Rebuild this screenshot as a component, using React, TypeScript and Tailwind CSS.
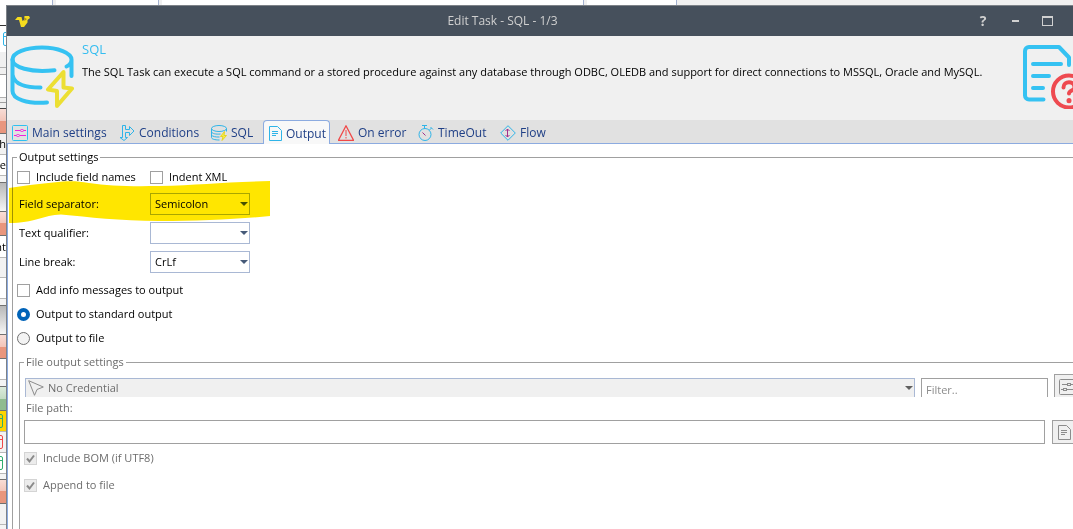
import React from "react";

type IconProps = { className?: string };

const SettingsIcon = ({ className = "" }: IconProps) => (
  <svg viewBox="0 0 16 16" className={className} fill="none">
    <rect x="0.5" y="0.5" width="15" height="15" rx="1" className="stroke-[#2fc0f0]" />
    <g className="stroke-[#f01ee0]">
      <path d="M3 5.5h5M12 5.5h2M2 10.5h2M8 10.5h6" />
      <rect x="8.5" y="4.5" width="3" height="2" rx="1" />
      <rect x="4.5" y="9.5" width="3" height="2" rx="1" />
    </g>
  </svg>
);

const ConditionsIcon = ({ className = "" }: IconProps) => (
  <svg viewBox="0 0 16 16" className={className} fill="none" stroke="#2fb4e8">
    <path d="M3.500 0.500h3v4h4v-3l4.500 4.500-4.500 4.500v-3h-4v5h2l-3.500 3-4-3h2.500z" />
  </svg>
);

const DatabaseIcon = ({ className = "" }: IconProps) => (
  <svg viewBox="0 0 64 64" className={className} fill="none" strokeWidth="4" strokeLinecap="round" strokeLinejoin="round">
    <g stroke="#35c2f2">
      <path d="M44.500 25.200C20 28 2.500 22 2.500 14.500C2.500 7.500 16 2.500 32 2.500S61.500 8 61.500 14.500C61.500 18 59 20.500 56.500 21.500M61.500 14.500V31" />
      <path d="M2.500 14.500V46C2.500 54 17 59 37 57.500" />
      <path d="M3 31.500C5 38.500 15 42.500 30.500 42.500" />
    </g>
    <path d="M53.500 27L38 44.500L47 46V61L62 43.500L53.500 42.500z" stroke="#ecdf33" />
  </svg>
);

const SmallDatabaseIcon = ({ className = "" }: IconProps) => (
  <svg viewBox="0 0 16 16" className={className} fill="none">
    <g stroke="#2fb4e8">
      <ellipse cx="8" cy="3.500" rx="7.500" ry="3" />
      <path d="M0.500 3.500v9c0 1.500 3 2.500 8 2.500M0.500 7c1 1.500 4 2.500 9 2M0.500 10c1 1.500 4 2.200 8 2M15.500 3.500v3" />
    </g>
    <path d="M13.500 6.500l-4 5h2.500l-1 4 4.500-5h-2.500z" stroke="#e5d620" fill="#f5ea50" />
  </svg>
);

const DocumentIcon = ({ className = "" }: IconProps) => (
  <svg viewBox="0 0 13 15" className={className} fill="none" stroke="currentColor">
    <path d="M0.500 0.500h8l4 4v10h-12zM3 5.500h6M3 7.500h6M3 9.500h4" />
  </svg>
);

const WarningIcon = ({ className = "" }: IconProps) => (
  <svg viewBox="0 0 16 16" className={className} fill="none" stroke="#f04848">
    <path d="M8 0.800L15.500 15.300H0.500z" strokeWidth="1.300" strokeLinejoin="round" />
    <path d="M8 5v6M8 12v1.500" />
  </svg>
);

const TimerIcon = ({ className = "" }: IconProps) => (
  <svg viewBox="0 0 16 16" className={className} fill="none" stroke="#2fb4e8">
    <circle cx="7" cy="9.500" r="6" />
    <path d="M4 0.500h5M6.500 1v2.500M11.500 5l2-2M12.500 2l2.500 2.500" />
    <path d="M4.500 7.500l3 3" stroke="#a0308c" />
  </svg>
);

const FlowIcon = ({ className = "" }: IconProps) => (
  <svg viewBox="0 0 16 16" className={className} fill="none">
    <path d="M8 0.700L15.300 8L8 15.300L0.700 8z" stroke="#2fb4e8" />
    <path d="M7.500 4v8M5.500 6l2-2 2 2M5.500 10l2 2 2-2" stroke="#a0308c" />
  </svg>
);

const HelpDocumentIcon = ({ className = "" }: IconProps) => (
  <svg viewBox="0 0 64 64" className={className} fill="none" strokeWidth="4" strokeLinecap="round" strokeLinejoin="round">
    <g stroke="#35c2f2">
      <path d="M20.500 54.500H6a4 4 0 0 1-4-4V6a4 4 0 0 1 4-4H36L46 12.500V20" />
      <path d="M10 19H38M10 31H26M10 43H20" />
    </g>
    <g stroke="#ee4a50">
      <circle cx="46" cy="46.500" r="16" />
      <path d="M40.500 42.500c0-7 11-7 11 0c0 3-5.500 3-5.500 6" />
      <path d="M46 55.500v0.200" strokeWidth="5" />
    </g>
  </svg>
);

const LogoIcon = ({ className = "" }: IconProps) => (
  <svg viewBox="0 0 15 11" className={className}>
    <path d="M0 4L2.500 1H6.500L7.500 5L9 4L9.500 0H14L15 2L12.500 4V6.500L9 11H6L4 4z" fill="#f6dc1e" />
    <path d="M9 1.500L12 3L9.500 5z" fill="#a48e1a" />
  </svg>
);

const CursorIcon = ({ className = "" }: IconProps) => (
  <svg viewBox="0 0 16 16" className={className} fill="none" stroke="#8c8c8c">
    <path d="M0.700 0.700L15.300 7L9 9.500L6.500 15.300z" strokeLinejoin="round" />
  </svg>
);

const SmallSlidersIcon = ({ className = "" }: IconProps) => (
  <svg viewBox="0 0 16 16" className={className} fill="none" stroke="#8c8c8c">
    <rect x="0.500" y="0.500" width="15" height="15" rx="1" />
    <path d="M3 5.500h5M12 5.500h2M2 10.500h2M8 10.500h6" />
    <rect x="8.500" y="4.500" width="3" height="2" />
    <rect x="4.500" y="9.500" width="3" height="2" />
  </svg>
);

const Triangle = ({ className = "" }: IconProps) => (
  <svg viewBox="0 0 8 4" className={`h-1 w-2 ${className}`} fill="currentColor">
    <path d="M0 0h8L4 4z" />
  </svg>
);

const RowBox = ({ className = "" }: IconProps) => (
  <svg viewBox="0 0 6 14" className={`h-3.5 w-1.5 shrink-0 ${className}`} fill="none" stroke="currentColor">
    <path d="M-4 0.500H1a1.500 1.500 0 0 1 1.500 1.500v10a1.500 1.500 0 0 1-1.500 1.500H-4M-4 4.500H2.500" />
  </svg>
);

const RED = "bg-linear-to-b from-[#f8ddd6] from-0% via-[#f3c5b9] via-50% to-[#e9967d] to-50%";
const GREEN = "bg-linear-to-b from-[#dcebdc] from-0% via-[#c3dcc3] via-50% to-[#8fbc8f] to-50%";
const GREY = "bg-linear-to-b from-[#b8b8b8] to-[#f6f6f6]";

const listRows: { look: string; content?: React.ReactNode }[] = [
  { look: "h-[21px] bg-white border-b border-[#333]" },
  { look: "h-[26px] bg-white", content: <RowBox className="-scale-x-100 text-[#2fb4e8]" /> },
  { look: "h-4 bg-[#f0f0f0] border-b border-[#b0b0b0]" },
  { look: "h-[7px] bg-[#f0f0f0] border-b border-[#a0a0a0]" },
  { look: "h-[23px] bg-white border-b border-[#b0b0b0]" },
  { look: "h-[5px] bg-[#f0f0f0] border-b border-[#a0a0a0]" },
  { look: "h-[6px] bg-[#f0f0f0] border-b border-[#444]" },
  { look: `h-[25px] border-b border-[#707070] ${RED}` },
  { look: "h-[21px] bg-[#f2f2f2] border-b border-[#b8b8b8]", content: "h" },
  { look: "h-[21px] bg-white border-b border-[#b8b8b8]", content: "e" },
  { look: "h-[7px] bg-[#f4f4f4] border-b border-[#707070]" },
  { look: `h-[29px] border-b border-[#707070] ${GREY}` },
  { look: `h-6 border-b border-[#707070] ${RED}` },
  { look: "h-[22px] bg-white border-b border-[#b8b8b8]", content: "nt" },
  { look: "h-5 bg-[#f2f2f2] border-b border-[#b8b8b8]" },
  { look: "h-[21px] bg-white border-b border-[#b8b8b8]" },
  { look: "h-[7px] bg-[#f4f4f4] border-b border-[#707070]" },
  { look: `h-[29px] border-b border-[#707070] ${GREY}` },
  { look: `h-6 border-b border-[#707070] ${RED}` },
  { look: "h-[21px] bg-white border-b border-[#b8b8b8]" },
  { look: "h-[7px] bg-[#f4f4f4] border-b border-[#707070]" },
  { look: `h-6 border-b border-[#707070] ${GREEN}` },
  { look: "h-[21px] bg-[#ffd400] border-b border-[#b8b8b8]", content: <RowBox className="text-[#2fae70]" /> },
  { look: "h-[21px] bg-[#f2f2f2] border-b border-[#b8b8b8]", content: <RowBox className="text-[#f04848]" /> },
  { look: "h-[21px] bg-white border-b border-[#b8b8b8]", content: <RowBox className="text-[#2fae70]" /> },
  { look: "h-[6px] bg-[#f4f4f4] border-b border-[#707070]" },
  { look: `h-6 border-b border-[#707070] ${RED}` },
  { look: "h-[21px] bg-[#f2f2f2] border-b border-[#b8b8b8]" },
  { look: "grow bg-[#f4f4f4]" },
];

const tabs = [
  { label: "Main settings", icon: <SettingsIcon className="size-4" />, look: "h-5 w-[107px]" },
  { label: "Conditions", icon: <ConditionsIcon className="size-4" />, look: "h-5 w-[92px]" },
  { label: "SQL", icon: <SmallDatabaseIcon className="size-4" />, look: "h-5 w-[57px]" },
  {
    label: "Output",
    icon: <DocumentIcon className="h-[15px] w-[13px] text-[#2fb4e8]" />,
    look: "-mb-px mr-[3px] h-6 w-[67px] rounded-t-sm border border-b-0 border-[#8cabe0] bg-[#f8f8f8] pt-0.5",
  },
  { label: "On error", icon: <WarningIcon className="size-4" />, look: "h-5 w-20" },
  { label: "TimeOut", icon: <TimerIcon className="size-4" />, look: "h-5 w-[82px]" },
  { label: "Flow", icon: <FlowIcon className="size-4" />, look: "h-5 w-16" },
];

function Combo({ id, options, value }: { id: string; options: string[]; value: string }) {
  return (
    <div className="relative h-[22px] w-[100px]">
      <select
        id={id}
        defaultValue={value}
        className="block size-full appearance-none border border-[#a9b8d4] bg-white pl-1 outline-none"
      >
        {options.map((o) => (
          <option key={o}>{o}</option>
        ))}
      </select>
      <Triangle className="pointer-events-none absolute top-[9px] right-0.5 text-[#465a78]" />
    </div>
  );
}

function Check({ label, checked = false, disabled = false }: { label: string; checked?: boolean; disabled?: boolean }) {
  return (
    <label className="flex items-center gap-1.5">
      <span className="relative size-[13px]">
        <input
          type="checkbox"
          defaultChecked={checked}
          disabled={disabled}
          className="peer block size-[13px] appearance-none border border-[#a0a0a0] bg-white disabled:border-[#d4d4d4] disabled:bg-[#ececec]"
        />
        <svg viewBox="0 0 13 13" className="pointer-events-none absolute inset-0 hidden peer-checked:block" fill="none">
          <path d="M3 6.500l2.500 3L10 3.500" stroke="#8a8a8a" strokeWidth="2" />
        </svg>
      </span>
      {label}
    </label>
  );
}

function Radio({ label, checked = false }: { label: string; checked?: boolean }) {
  return (
    <label className="flex items-center gap-1.5">
      <input
        type="radio"
        name="target"
        defaultChecked={checked}
        className="size-[13px] appearance-none rounded-full border border-[#707070] bg-[#f3f3f3] checked:border-4 checked:border-[#0063b8] checked:bg-white"
      />
      {label}
    </label>
  );
}

const Highlighter = () => (
  <svg
    viewBox="0 0 262 44"
    className="pointer-events-none absolute top-4 -left-1 h-11 w-[262px] mix-blend-multiply"
    fill="#ffe600"
  >
    <path d="M0 7C14 5 28 3 44 1.500C58 0 66 -0.500 80 2C100 5 120 5.500 150 5C190 4 215 1 261 0V35C230 38 190 40 150 40C110 40 80 36 52 33.500C34 34 26 42 0 42z" />
  </svg>
);

export default function App() {
  return (
    <div className="flex min-h-screen flex-col overflow-hidden bg-[#f0f0f0] font-['Open_Sans','Noto_Sans',sans-serif] text-[11px] leading-4 text-black">
      <div className="flex h-[5px] gap-[3px]" aria-hidden="true">
        <div className="w-[53px] border-r border-[#a3b1d0] bg-white" />
        <div className="w-[103px] border-r border-[#a3b1d0] bg-white" />
        <div className="w-[422px] border-r border-[#a3b1d0] bg-white" />
        <div className="w-[90px] border-r border-[#a3b1d0] bg-white" />
      </div>

      <div className="flex grow">
        <div className="flex w-1.5 shrink-0 flex-col overflow-hidden" aria-hidden="true">
          {listRows.map((row, i) => (
            <div key={i} className={`flex shrink-0 items-center justify-end overflow-hidden ${row.look}`}>
              {row.content}
            </div>
          ))}
        </div>

        <main className="-mr-4 flex min-w-0 grow flex-col border-t border-l border-[#7d8288] bg-white">
          <header className="flex h-[30px] items-center bg-[#46505c] pl-2 text-[#d0d0d0]">
            <LogoIcon className="h-[11px] w-[15px]" />
            <h1 className="grow pl-2 text-center text-xs">Edit Task - SQL - 1/3</h1>
            <div className="flex items-center pr-[26px]">
              <button aria-label="Help" className="w-8 text-sm leading-4 font-bold">?</button>
              <button aria-label="Minimize" className="flex h-4 w-8 items-center justify-center">
                <span className="h-0.5 w-[7px] bg-[#d0d0d0]" />
              </button>
              <button aria-label="Maximize" className="flex h-4 w-8 items-center justify-center">
                <span className="h-2.5 w-[11px] border border-t-2 border-[#d0d0d0]" />
              </button>
            </div>
          </header>

          <section className="flex h-[84px] bg-[#f0f0f0] pt-[9px] pr-0.5 pl-[3px]">
            <DatabaseIcon className="size-16 shrink-0" />
            <div className="min-w-0 grow pl-2">
              <h2 className="-mt-1 text-[13px] leading-4 text-[#35bdf0]">SQL</h2>
              <p className="mt-[7px] whitespace-nowrap">
                The SQL Task can execute a SQL command or a stored procedure against any database through ODBC, OLEDB and
                support for direct connections to MSSQL, Oracle and MySQL.
              </p>
            </div>
            <HelpDocumentIcon className="size-16 shrink-0" />
          </section>

          <nav className="flex h-6 items-end border-b border-[#8cabe0] bg-[#e1e1e1] text-xs text-[#1f3f86]">
            {tabs.map((t) => (
              <button
                key={t.label}
                className={`flex shrink-0 items-center gap-1 pl-[5px] whitespace-nowrap ${t.look}`}
              >
                {t.icon}
                {t.label}
              </button>
            ))}
          </nav>

          <div className="flex grow flex-col border-l border-[#8cabe0] pt-[5px] pl-1">
            <fieldset className="relative flex min-w-0 grow flex-col border-t border-l border-[#a0a0a0] pl-1">
              <legend className="px-0.5">Output settings</legend>
              <div className="mt-0.5 flex h-5 items-center">
                <div className="w-[133px]">
                  <Check label="Include field names" />
                </div>
                <Check label="Indent XML" />
              </div>
              <div className="mt-1.5 grid grid-cols-[131px_100px] items-center gap-y-[7px] pl-0.5">
                <label htmlFor="separator">Field separator:</label>
                <Combo id="separator" value="Semicolon" options={["Semicolon", "Comma", "Tab"]} />
                <label htmlFor="qualifier">Text qualifier:</label>
                <Combo id="qualifier" value="" options={["", "Single quote", "Double quote"]} />
                <label htmlFor="linebreak">Line break:</label>
                <Combo id="linebreak" value="CrLf" options={["CrLf", "Cr", "Lf"]} />
              </div>
              <div className="mt-[9px] flex flex-col gap-2">
                <Check label="Add info messages to output" />
                <Radio label="Output to standard output" checked />
                <Radio label="Output to file" />
              </div>
              <Highlighter />

              <fieldset className="mt-2 ml-0.5 flex min-w-0 grow flex-col border-t border-l border-[#a0a0a0] pl-1 text-[#6d6d6d]">
                <legend className="px-0.5">File output settings</legend>
                <div className="mt-1 flex h-[23px] overflow-hidden pl-px">
                  <div className="relative mt-1 h-5 grow">
                    <select
                      aria-label="Credential"
                      disabled
                      className="block size-full appearance-none border border-[#a9b8d4] bg-[#f0f0f0] pl-[22px] opacity-100"
                    >
                      <option>No Credential</option>
                    </select>
                    <CursorIcon className="pointer-events-none absolute top-0.5 left-[3px] size-4" />
                    <Triangle className="pointer-events-none absolute top-2 right-0.5 text-[#606060]" />
                  </div>
                  <input
                    aria-label="Filter"
                    placeholder="Filter.."
                    disabled
                    className="mt-1 ml-1.5 h-[22px] w-[127px] border border-[#a0a0a0] bg-white px-1 placeholder:text-[#8c8c8c]"
                  />
                  <button
                    aria-label="Credential settings"
                    disabled
                    className="ml-1.5 flex h-7 w-[35px] border border-[#a0a0a0] bg-[#f0f0f0] pt-1 pl-1"
                  >
                    <SmallSlidersIcon className="size-4" />
                  </button>
                </div>
                <label htmlFor="path" className="mt-[3px] pl-0.5">
                  File path:
                </label>
                <div className="mt-1 flex items-center gap-[7px]">
                  <input id="path" disabled className="h-6 grow border border-[#a0a0a0] bg-white px-1" />
                  <button
                    aria-label="Browse"
                    disabled
                    className="flex h-6 w-[37px] items-center border border-[#a0a0a0] bg-[#f0f0f0] pl-[5px]"
                  >
                    <DocumentIcon className="h-[15px] w-[13px] text-[#8c8c8c]" />
                  </button>
                </div>
                <div className="mt-1.5 flex flex-col gap-[11px]">
                  <Check label="Include BOM (if UTF8)" checked disabled />
                  <Check label="Append to file" checked disabled />
                </div>
              </fieldset>
            </fieldset>
          </div>
        </main>
      </div>
    </div>
  );
}
